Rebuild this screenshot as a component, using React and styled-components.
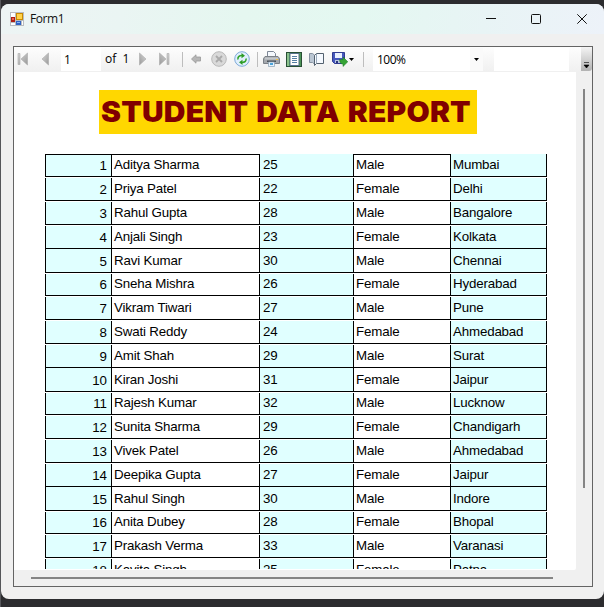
import React from "react";
import styled, { createGlobalStyle } from "styled-components";

const Global = createGlobalStyle`
  * { box-sizing: border-box; }
  body { margin: 0; background: #2d2d30; overflow: hidden; }
`;

const Desktop = styled.div`
  width: 604px;
  height: 607px;
  padding: 4px 0 0 1px;
  background: linear-gradient(90deg, #55565a 1px, #2c2c2f 1px);
  overflow: hidden;
`;

const Window = styled.main`
  display: flex;
  flex-direction: column;
  width: 603px;
  height: 595px;
  border-radius: 8px;
  background: #f0f0f0;
  overflow: hidden;
`;

const TitleBar = styled.header`
  display: flex;
  align-items: center;
  height: 30px;
  flex: none;
  padding-left: 9px;
  background: linear-gradient(100deg, #edf4f4 0%, #eaf5f3 20%, #e5f7f0 40%, #e4f8f1 60%, #e8f4f5 80%, #edf2f9 100%);
`;

const Caption = styled.span`
  flex: 1;
  margin-left: 6px;
  font: 12px/16px "Open Sans", "Noto Sans", sans-serif;
  letter-spacing: -0.45px;
  color: #111;
`;

const CaptionButton = styled.div`
  display: flex;
  align-items: center;
  justify-content: center;
  width: ${(p) => p.$w || 46}px;
  height: 30px;
  &:last-child { margin-right: -1px; }
`;

const Viewer = styled.section`
  display: grid;
  grid-template: 25px 498px 1fr / 562px 1fr;
  width: 580px;
  height: 541px;
  margin: 12px 0 0 12px;
  border: 1px solid #646464;
`;

const Toolbar = styled.nav`
  grid-column: 1 / -1;
  display: flex;
  align-items: flex-start;
  height: 25px;
  background: linear-gradient(#fdfdfd, #f0f0f0);
  font: 12px/24px "Open Sans", "Noto Sans", sans-serif;
  color: #000;
`;

const Tool = styled.div`
  display: flex;
  flex: none;
  width: ${(p) => p.$w}px;
  height: 24px;
  margin-left: ${(p) => p.$gap || 0}px;
  align-items: center;
`;

const Field = styled.div`
  flex: none;
  width: ${(p) => p.$w}px;
  height: 23px;
  line-height: 23px;
  margin: 1px 0 0 ${(p) => p.$gap || 0}px;
  padding-left: 3px;
  background: #fff;
  letter-spacing: -0.5px;
`;

const Zoom = styled(Field)`
  display: flex;
  justify-content: space-between;
  padding-left: 4px;
`;

const DropArrow = styled.div`
  display: flex;
  align-items: center;
  justify-content: center;
  width: 13px;
  background: #fafafa;
`;

const Label = styled.div`
  flex: none;
  width: ${(p) => p.$w}px;
  margin-left: ${(p) => p.$gap}px;
  white-space: pre;
`;

const Divider = styled.div`
  flex: none;
  width: 1px;
  height: 15px;
  margin: 5px 0 0 ${(p) => p.$gap}px;
  background: #bdbdbd;
`;

const Overflow = styled.div`
  display: flex;
  align-items: flex-end;
  justify-content: center;
  width: 11px;
  height: 24px;
  margin-left: auto;
  padding-bottom: 3px;
  border-radius: 0 0 3px 0;
  background: linear-gradient(#f4f4f4, #b2b2b2);
`;

const Page = styled.article`
  background: #fff;
  border-radius: 0 0 2px 0;
  overflow: hidden;
  padding: 18px 0 0 31px;
`;

const Heading = styled.h1`
  width: 378px;
  height: 44px;
  margin: 0 0 20px 54px;
  padding-left: 2px;
  background: #ffd700;
  color: #800000;
  font: 900 28px/44px Inter, "Liberation Sans", sans-serif;
  letter-spacing: 0.2px;
  word-spacing: 1.6px;
  white-space: nowrap;
`;

const Wide = styled.span`
  display: inline-block;
  transform: scaleX(1.07);
  transform-origin: 0 50%;
`;

const Table = styled.div`
  width: 502px;
  height: 415px;
  overflow: hidden;
`;

const Row = styled.div`
  display: grid;
  grid-template-columns: 66px 148px 94px 97px 97px;
  height: ${(p) => p.$h}px;
  padding-top: ${(p) => p.$gap}px;
`;

const Cell = styled.div`
  display: flex;
  align-items: flex-end;
  min-height: 0;
  padding: 0 0 1px 2px;
  border-left: 1px solid #000;
  border-bottom: 1px solid #000;
  border-top: ${(p) => (p.$top ? "1px solid #000" : "0")};
  background: ${(p) => (p.$tint ? "#e0ffff" : "#fff")};
  color: #000;
  font: 13.33px/20px "Liberation Sans", Arial, sans-serif;
  letter-spacing: -0.17px;
  white-space: nowrap;
`;

const NumberCell = styled(Cell)`
  justify-content: flex-end;
  padding: 0 4px 0 0;
  letter-spacing: 0;
`;

const AgeCell = styled(Cell)`
  padding-left: 3px;
`;

const LastCell = styled(Cell)`
  border-right: 1px solid #000;
`;

const VerticalTrack = styled.div`
  padding: 17px 0 0 7px;
`;

const VerticalThumb = styled.div`
  width: 2px;
  height: 399px;
  background: #858585;
`;

const HorizontalTrack = styled.div`
  grid-column: 1 / -1;
  padding: 7px 0 0 17px;
`;

const HorizontalThumb = styled.div`
  width: 522px;
  height: 2px;
  background: #858585;
`;

const data = [
  ["Aditya Sharma", 25, "Male", "Mumbai"],
  ["Priya Patel", 22, "Female", "Delhi"],
  ["Rahul Gupta", 28, "Male", "Bangalore"],
  ["Anjali Singh", 23, "Female", "Kolkata"],
  ["Ravi Kumar", 30, "Male", "Chennai"],
  ["Sneha Mishra", 26, "Female", "Hyderabad"],
  ["Vikram Tiwari", 27, "Male", "Pune"],
  ["Swati Reddy", 24, "Female", "Ahmedabad"],
  ["Amit Shah", 29, "Male", "Surat"],
  ["Kiran Joshi", 31, "Female", "Jaipur"],
  ["Rajesh Kumar", 32, "Male", "Lucknow"],
  ["Sunita Sharma", 29, "Female", "Chandigarh"],
  ["Vivek Patel", 26, "Male", "Ahmedabad"],
  ["Deepika Gupta", 27, "Female", "Jaipur"],
  ["Rahul Singh", 30, "Male", "Indore"],
  ["Anita Dubey", 28, "Female", "Bhopal"],
  ["Prakash Verma", 33, "Male", "Varanasi"],
  ["Kavita Singh", 25, "Female", "Patna"],
];

const rowHeights = [23, 24, 24, 24, 24, 23, 24, 24, 24, 24, 23, 24, 24, 24, 24, 23, 24, 24];
const joinedRows = [0, 4, 9, 14];

const FormIcon = () => (
  <svg width="14" height="14" viewBox="0 0 14 14">
    <rect width="14" height="14" fill="#b9bcc0" />
    <path d="M1 1h4v4H1zM1 11h4v2H1zM12 9h1v4h-1z" fill="#fff" />
    <rect x="1" y="5" width="4" height="5" fill="#b01e13" />
    <rect x="2" y="6" width="2" height="2" fill="#e8604c" />
    <rect x="6" y="1" width="7" height="7" fill="#c98a00" />
    <rect x="7" y="2" width="5" height="5" fill="#ffd24a" />
    <rect x="6" y="9" width="5" height="4" fill="#2f62c4" />
    <rect x="7" y="10" width="3" height="1" fill="#86b2f5" />
  </svg>
);

const Arrow = ({ flip, bar }) => (
  <svg width="12" height="14" viewBox="0 0 12 14">
    <defs>
      <linearGradient id="steel" x1="0" y1="0" x2="1" y2="1">
        <stop offset="0" stopColor="#d8d8d8" />
        <stop offset="1" stopColor="#989898" />
      </linearGradient>
    </defs>
    <g transform={flip ? "translate(12 0) scale(-1 1)" : undefined}>
      <path d={bar ? "M1 1.500h2v11h-2zM10.500 1v12L4 7z" : "M8.500 1v12L2 7z"} fill="url(#steel)" stroke="#aaa" strokeWidth=".6" />
    </g>
  </svg>
);

const Caret = () => (
  <svg width="5" height="3" viewBox="0 0 5 3"><path d="M0 0h5L2.500 3z" fill="#000" /></svg>
);

const BackIcon = () => (
  <svg width="10" height="10" viewBox="0 0 10 10">
    <path d="M.5 5L5 .8V3h4.500v4H5v2.200z" fill="#b6b6b6" stroke="#999" strokeWidth=".8" />
  </svg>
);

const StopIcon = () => (
  <svg width="16" height="16" viewBox="0 0 16 16">
    <circle cx="8" cy="8" r="7.300" fill="#d9d9d9" stroke="#b8b8b8" />
    <path d="M5 5l6 6M11 5l-6 6" stroke="#aaa" strokeWidth="1.800" />
  </svg>
);

const RefreshIcon = () => (
  <svg width="16" height="16" viewBox="0 0 16 16">
    <circle cx="8" cy="8" r="7.300" fill="#e0effd" stroke="#7ea9d8" />
    <path d="M4 8.500C3.500 6 5 4.500 8 4.500M12 7.500C12.500 10 11 11.500 8 11.500" fill="none" stroke="#35a52c" strokeWidth="1.600" />
    <path d="M7.500 2l3.500 2.700-3.500 2.600zM8.500 8.700V14L5 11.300z" fill="#2c9a27" />
  </svg>
);

const PrintIcon = () => (
  <svg width="17" height="16" viewBox="0 0 17 16">
    <path d="M4.500 6V.5h6l2 2V6z" fill="#f4f8fd" stroke="#7d8795" />
    <path d="M2 5.500h13l1.500 2v5h-16v-5z" fill="#a4a8ad" stroke="#7b8087" />
    <path d="M2 6.500h13v2H2z" fill="#c3c7cb" />
    <path d="M4 9.500h9v1.500H4z" fill="#4a5058" />
    <path d="M5.500 11h6v4.500h-6z" fill="#e7f3fd" stroke="#8aa0b5" strokeWidth=".7" />
    <path d="M7 12h3v2H7z" fill="#4ca3d9" />
    <path d="M13 8h2v1h-2z" fill="#f0c040" />
  </svg>
);

const LayoutIcon = () => (
  <svg width="16" height="15" viewBox="0 0 16 15">
    <rect x=".5" y=".5" width="15" height="14" fill="#4c9457" stroke="#284f35" />
    <path d="M1 1h2v13H1z" fill="#8ac18c" />
    <path d="M4 1.500h9v12H4z" fill="#fff" stroke="#56718c" />
    <path d="M6 4.500h5M6 6.500h5M6 8.500h5M6 10.500h5" stroke="#557fa5" />
  </svg>
);

const SetupIcon = () => (
  <svg width="15" height="14" viewBox="0 0 15 14">
    <path d="M.5 1.500h3l2 1.500v9l-2-1.500h-3z" fill="#bac6d3" stroke="#8591a0" />
    <path d="M5.500 3.500l2-2h7v10h-7l-2 2z" fill="#f5f9ff" stroke="#53616f" />
    <path d="M7.500 2v9" stroke="#9aabbb" />
  </svg>
);

const ExportIcon = () => (
  <svg width="16" height="16" viewBox="0 0 16 16">
    <path d="M.5 1.500h12v11h-10l-2-2z" fill="#4557bd" stroke="#303b91" />
    <path d="M3 2h7v5H3z" fill="#e9f0ff" />
    <path d="M3 9h6v3H3z" fill="#b9c4df" />
    <path d="M4 10h2v2H4z" fill="#26347a" />
    <path d="M7.500 8.500H11V6l4.800 4.800L11 15.500V13c-2 0-3-1-3.500-4.500z" fill="#35a335" stroke="#197a22" strokeWidth=".5" />
  </svg>
);

export default function App() {
  return (
    <Desktop>
      <Global />
      <Window>
        <TitleBar>
          <FormIcon />
          <Caption>Form1</Caption>
          <CaptionButton $w={44}><svg width="10" height="10"><path d="M0 4.500h10" stroke="#111" /></svg></CaptionButton>
          <CaptionButton><svg width="10" height="10"><rect x=".5" y=".5" width="9" height="9" rx="1" fill="none" stroke="#111" /></svg></CaptionButton>
          <CaptionButton><svg width="10" height="10"><path d="M.3.3l9.400 9.400M9.700.3L.3 9.700" stroke="#111" /></svg></CaptionButton>
        </TitleBar>
        <Viewer>
          <Toolbar>
            <Tool $w={12} $gap={3}><Arrow bar /></Tool>
            <Tool $w={12} $gap={11}><Arrow /></Tool>
            <Field $w={40} $gap={9}>1</Field>
            <Label $gap={4} $w={30}>of  1</Label>
            <Tool $w={12} $gap={1}><Arrow flip /></Tool>
            <Tool $w={12} $gap={10}><Arrow flip bar /></Tool>
            <Divider $gap={12} />
            <Tool $w={10} $gap={8}><BackIcon /></Tool>
            <Tool $w={16} $gap={10}><StopIcon /></Tool>
            <Tool $w={16} $gap={7}><RefreshIcon /></Tool>
            <Divider $gap={7} />
            <Tool $w={17} $gap={5}><PrintIcon /></Tool>
            <Tool $w={16} $gap={6}><LayoutIcon /></Tool>
            <Tool $w={15} $gap={7}><SetupIcon /></Tool>
            <Tool $w={16} $gap={8}><ExportIcon /></Tool>
            <Tool $w={5} $gap={1}><Caret /></Tool>
            <Divider $gap={9} />
            <Zoom $w={110} $gap={9}>100%<DropArrow><Caret /></DropArrow></Zoom>
            <Field $w={75} $gap={11} />
            <Overflow><svg width="7" height="6"><path d="M1 .5h5M1 3h5L3.500 6z" fill="#000" stroke="#000" strokeWidth=".6" /></svg></Overflow>
          </Toolbar>
          <Page>
            <Heading><Wide>STUDENT DATA REPORT</Wide></Heading>
            <Table>
              {data.map(([name, age, gender, city], i) => (
                <Row key={name} $h={rowHeights[i]} $gap={joinedRows.includes(i) ? 0 : 1}>
                  <NumberCell $tint $top={i === 0}>{i + 1}</NumberCell>
                  <Cell $top={i === 0}>{name}</Cell>
                  <AgeCell $tint>{age}</AgeCell>
                  <Cell $top={i === 0}>{gender}</Cell>
                  <LastCell $tint>{city}</LastCell>
                </Row>
              ))}
            </Table>
          </Page>
          <VerticalTrack><VerticalThumb /></VerticalTrack>
          <HorizontalTrack><HorizontalThumb /></HorizontalTrack>
        </Viewer>
      </Window>
    </Desktop>
  );
}
